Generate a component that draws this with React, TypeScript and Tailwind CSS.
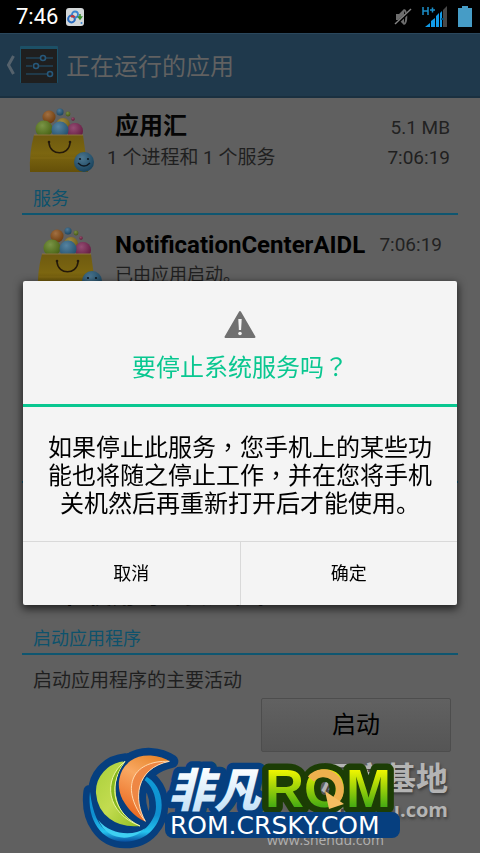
import { useId } from "react";

const cjk = "font-['Roboto','Noto_Sans_CJK_SC',sans-serif]";

function BagIcon({ className }: { className?: string }) {
    const id = useId();
    return (
        <svg viewBox="0 0 66 66" className={className} aria-hidden="true">
            <defs>
                <linearGradient id={`${id}bag`} x1="0" y1="0" x2="0" y2="1">
                    <stop offset="0" stopColor="#6e5a10" />
                    <stop offset="0.5" stopColor="#7c6610" />
                    <stop offset="1" stopColor="#655009" />
                </linearGradient>
                <radialGradient id={`${id}shine`} cx="0.4" cy="0.3" r="0.7">
                    <stop offset="0" stopColor="#fff" stopOpacity="0.2" />
                    <stop offset="1" stopColor="#000" stopOpacity="0.2" />
                </radialGradient>
            </defs>
            {[
                [20, 9, 6.5, "#8a4c12"],
                [31, 4, 3.5, "#23587c"],
                [39, 6, 2.4, "#587019"],
                [44, 11, 1.7, "#7a1f45"],
                [34, 17, 7, "#8b7015"],
                [15, 21, 8.5, "#597a18"],
                [46, 23, 8, "#7a2050"],
                [31, 22, 8.5, "#2c6488"],
            ].map(([cx, cy, r, fill]) => (
                <g key={`${cx}-${cy}`}>
                    <circle cx={cx} cy={cy} r={r} fill={fill as string} />
                    <circle cx={cx} cy={cy} r={r} fill={`url(#${id}shine)`} />
                </g>
            ))}
            <path d="M5 27H54L59 64H1Q0 45 5 27Z" fill={`url(#${id}bag)`} />
            <path d="M5 27H54" stroke="#8c7440" strokeWidth="1" />
            <path d="M2 50H58" stroke="#89701a" strokeWidth="0.6" />
            <path d="M20 35C21 48 40 48 41 35" fill="none" stroke="#24190a" strokeWidth="1.6" />
            <circle cx="20" cy="34" r="1.3" fill="#24190a" />
            <circle cx="41" cy="34" r="1.3" fill="#24190a" />
            <circle cx="55" cy="54" r="10" fill="#1f5474" />
            <circle cx="55" cy="54" r="10" fill={`url(#${id}shine)`} />
            <circle cx="51" cy="51" r="1.1" fill="#101820" />
            <circle cx="59" cy="51" r="1.1" fill="#101820" />
            <path d="M49 55Q55 61 61 55" fill="none" stroke="#101820" strokeWidth="1.4" />
        </svg>
    );
}

function StatusBar() {
    return (
        <header className="flex h-[33px] items-center bg-black pl-4 pr-2 text-white">
            <span className="text-[22px] leading-8">7:46</span>
            <svg viewBox="0 0 18 18" className="ml-2 size-[18px]" aria-hidden="true">
                <rect width="18" height="18" rx="3" fill="#d3d7d9" />
                <circle cx="5.5" cy="11" r="3.4" fill="none" stroke="#2a6cc0" strokeWidth="2" />
                <circle cx="9" cy="6.5" r="3" fill="none" stroke="#3a84d0" strokeWidth="1.8" />
                <path d="M5 9Q7 7 8.5 9.5" fill="none" stroke="#d03030" strokeWidth="2" />
                <path d="M14 6v3M12.5 9l1.5 2 1.5-2z" fill="#388c2c" stroke="#388c2c" strokeWidth="1.5" />
                <circle cx="15.5" cy="15" r="1" fill="#3a84d0" />
            </svg>
            <div className="ml-auto flex items-center">
                <svg viewBox="0 0 18 18" className="size-[18px]" aria-hidden="true">
                    <path d="M2 6h3l5-5v16l-5-5H2z" fill="#6d6d6d" />
                    <path d="M10 2c3 1 3 13 0 14" fill="none" stroke="#6d6d6d" strokeWidth="2" />
                    <path d="M1 17L17 2" stroke="#000" strokeWidth="3" />
                    <path d="M1 16L17 1" stroke="#858585" strokeWidth="1.4" />
                </svg>
                <svg viewBox="0 0 26 22" className="ml-2.5 h-[22px] w-[26px]" aria-hidden="true">
                    <path d="M1 1v8M6 1v8M1 5h5M8 4h5M10.5 1.5v5" fill="none" stroke="#1b8fc9" strokeWidth="1.5" />
                    <path d="M3 21l5-4v4zM9 21v-6l4-3v9zM14 21V10l3-3v14zM18 21V7l2-2v16z" fill="#119be8" />
                    <path d="M21 21V4l4-4v21z" fill="#484848" />
                    <path d="M19 13h3" stroke="#0a5078" strokeWidth="2" />
                </svg>
                <svg viewBox="0 0 14 21" className="ml-2.5 h-[21px] w-[14px]" aria-hidden="true">
                    <path d="M0 2h4V0h6v2h4v19H0z" fill="#469cc6" />
                </svg>
            </div>
        </header>
    );
}

function ActionBar() {
    return (
        <div className="flex h-[65px] items-center border-b-2 border-t border-b-[#1a3040] border-t-[#2a475c] bg-[#1f394c] pl-1.5">
            <button aria-label="返回" className="flex items-center">
                <svg viewBox="0 0 10 20" className="h-5 w-2.5" aria-hidden="true">
                    <path d="M7.5 1L2.5 10l5 9" fill="none" stroke="#55626c" strokeWidth="3" />
                </svg>
                <svg viewBox="0 0 38 38" className="ml-1 size-[38px]" aria-hidden="true">
                    <rect width="38" height="37" rx="1" fill="#1c5066" />
                    <rect x="1" y="3" width="36" height="34" fill="#1f1f1f" />
                    <path d="M6 12h14M26 12h7M6 20h6M19 20h14M6 28h21" stroke="#22445a" strokeWidth="1.5" />
                    <g fill="none" stroke="#27587a" strokeWidth="1.6">
                        <circle cx="23" cy="12" r="2.5" />
                        <circle cx="16" cy="20" r="2.5" />
                        <circle cx="30" cy="28" r="2.5" />
                    </g>
                </svg>
            </button>
            <h1 className="ml-2 pt-1 text-[24px] leading-8 text-[#616161]">正在运行的应用</h1>
        </div>
    );
}

function SectionTitle({ children }: { children: string }) {
    return (
        <h2 className="border-b-2 border-[#0f5670] pl-[11px] text-[18px] leading-7 text-[#0d526c]">
            {children}
        </h2>
    );
}

// Full-width mark that sits in the middle of its cell
function Mark({ children }: { children: string }) {
    return <span className="font-['Noto_Sans_CJK_TC',sans-serif] leading-none">{children}</span>;
}

function StopDialog() {
    return (
        <div className="fixed inset-x-0 bottom-0 top-[33px] flex items-center px-[23px]">
            <div
                role="alertdialog"
                aria-labelledby="stop-title"
                aria-describedby="stop-text"
                className="w-full rounded-xs bg-[#f4f4f4] text-center text-black shadow-[0_3px_9px_1px_rgba(0,0,0,0.65)]"
            >
                <div className="flex flex-col items-center border-b-3 border-[#09c790] pb-[18px] pt-[29px]">
                    <svg viewBox="0 0 32 28" className="h-7 w-8" aria-hidden="true">
                        <path d="M16 2L30.5 27h-29z" fill="#707070" stroke="#707070" strokeWidth="2" strokeLinejoin="round" />
                        <path d="M14.3 9h3.4l-.6 11h-2.2z" fill="#f4f4f4" />
                        <circle cx="16" cy="23.5" r="1.8" fill="#f4f4f4" />
                    </svg>
                    <h2 id="stop-title" className="mt-3 text-[24px] leading-9 text-[#09c790]">
                        要停止系统服务吗<Mark>？</Mark>
                    </h2>
                </div>
                <p id="stop-text" className="px-6 pb-[23px] pt-[27px] text-[24px] leading-7">
                    如果停止此服务<Mark>，</Mark>您手机上的某些功能也将随之停止工作<Mark>，</Mark>并在您将手机关机然后再重新打开后才能使用。
                </p>
                <div className="flex h-16 border-t border-[#d9d9d9] text-[18px]">
                    <button className="flex-1 border-r border-[#d9d9d9]">取消</button>
                    <button className="flex-1">确定</button>
                </div>
            </div>
        </div>
    );
}

const ring =
    "M60 155C50 240 95 305 165 305C235 305 275 250 275 195C275 155 255 122 225 107L220 118C245 135 258 165 258 200C258 225 245 245 230 262C200 290 150 295 115 275C85 260 68 220 60 155Z";
const lime = "M167 60C110 65 72 110 75 160C80 225 135 272 218 260C150 235 110 150 167 60Z";
const orange = "M305 64C270 40 215 35 180 60C140 90 135 140 155 180C175 215 200 240 232 250C195 190 190 90 305 64Z";

function RomLogo() {
    const id = useId();
    return (
        <svg
            viewBox="0 0 320 106"
            className="absolute left-[82px] top-[747px] h-[106px] w-[320px]"
            aria-label="非凡ROM"
        >
            <defs>
                <linearGradient id={`${id}rom`} x1="0" y1="0" x2="0" y2="1">
                    <stop offset="0.2" stopColor="#f0f600" />
                    <stop offset="0.8" stopColor="#49ac12" />
                </linearGradient>
                <linearGradient id={`${id}lime`} x1="0" y1="0" x2="1" y2="1">
                    <stop offset="0" stopColor="#a8cf3a" />
                    <stop offset="0.5" stopColor="#c3dc50" />
                    <stop offset="1" stopColor="#8fbd20" />
                </linearGradient>
                <linearGradient id={`${id}orange`} x1="0.8" y1="0" x2="0.4" y2="1">
                    <stop offset="0" stopColor="#e58226" />
                    <stop offset="0.4" stopColor="#f9a862" />
                    <stop offset="1" stopColor="#e9641c" />
                </linearGradient>
                <linearGradient id={`${id}ring`} x1="0" y1="0" x2="0" y2="1">
                    <stop offset="0" stopColor="#0f9bd7" />
                    <stop offset="0.6" stopColor="#0f8fcf" />
                    <stop offset="0.85" stopColor="#25c3ee" />
                    <stop offset="1" stopColor="#084fa0" />
                </linearGradient>
                <linearGradient id={`${id}ice`} x1="0" y1="0" x2="0" y2="1">
                    <stop offset="0.2" stopColor="#fff" />
                    <stop offset="1" stopColor="#b8dcf6" />
                </linearGradient>
            </defs>

            <g transform="scale(0.3333) translate(-36 -21)" strokeLinejoin="round">
                <path d={`${ring}${lime}${orange}`} fill="#063f7f" stroke="#063f7f" strokeWidth="40" />
                <path d={ring} fill={`url(#${id}ring)`} />
                <path d="M85 240C120 285 190 290 225 265C185 310 110 300 85 240Z" fill="#3fd0f2" />
                <path d={lime} fill={`url(#${id}lime)`} stroke="#063f7f" strokeWidth="6" />
                <path d="M165 64C95 120 110 220 210 258C140 225 105 150 165 64Z" fill="#86b71c" stroke="#edf5a0" strokeWidth="3" />
                <path d={orange} fill={`url(#${id}orange)`} stroke="#063f7f" strokeWidth="6" />
                <path d="M298 64C180 60 150 150 226 244C190 180 195 85 298 64Z" fill="#ee8744" stroke="#ffd9ae" strokeWidth="3" />
            </g>

            <g className="font-['Noto_Sans_CJK_SC',sans-serif] text-[46px] font-black italic" strokeLinejoin="round">
                <text x="86" y="60" fill={`url(#${id}ice)`} stroke="#063f7f" strokeWidth="13" paintOrder="stroke">
                    非凡
                </text>
            </g>
            <g className="font-['Liberation_Sans',sans-serif] text-[54px] font-bold" strokeLinejoin="round">
                <text x="183" y="60" fill={`url(#${id}rom)`} stroke="#1c3d05" strokeWidth="13" paintOrder="stroke">
                    ROM
                </text>
            </g>
            <path d="M229 32A16 16 0 1 1 254 53" fill="none" stroke="#eeb04e" strokeWidth="8" />
            <path d="M243 44L262 57L247 62Z" fill="#f3bd62" />
            <rect x="83" y="65" width="235" height="26" rx="8" fill="#063f7f" />
            <text x="88" y="87" fill="#fff" className="font-['DejaVu_Sans',sans-serif] text-[25px]">
                ROM.CRSKY.COM
            </text>
        </svg>
    );
}

export default function App() {
    return (
        <div className={`relative min-h-screen overflow-hidden bg-[#606060] ${cjk}`}>
            <StatusBar />
            <ActionBar />

            <main className="px-[22px]">
                <div className="flex h-[87px] pl-[7px] pt-2.5">
                    <BagIcon className="size-[66px]" />
                    <div className="ml-3 flex-1">
                        <div className="flex items-center pl-2">
                            <h2 className="text-[24px] font-bold leading-9 text-[#050505]">应用汇</h2>
                            <span className="ml-auto pr-2 pt-1 text-[19px] text-[#222]">5.1 MB</span>
                        </div>
                        <div className="flex text-[19px] leading-7 text-[#1f1f1f]">
                            <span>1 个进程和 1 个服务</span>
                            <span className="ml-auto pr-2">7:06:19</span>
                        </div>
                    </div>
                </div>

                <SectionTitle>服务</SectionTitle>

                <div className="flex h-[238px] pl-[15px] pt-3">
                    <BagIcon className="size-[66px]" />
                    <div className="ml-3 flex-1">
                        <div className="flex items-center pr-4 leading-9">
                            <h2 className="text-[24px] font-bold text-black">NotificationCenterAIDL</h2>
                            <span className="ml-auto text-[19px] text-[#222]">7:06:19</span>
                        </div>
                        <p className="text-[18px] leading-6 text-[#1f1f1f]">已由应用启动。</p>
                    </div>
                </div>

                <SectionTitle>进程</SectionTitle>

                <div className="flex h-[142px] flex-col justify-end pb-3 pl-[18px]">
                    <p className="text-[24px] font-bold leading-9 text-black">正在使用的主要进程。</p>
                </div>

                <SectionTitle>启动应用程序</SectionTitle>
                <p className="pl-[11px] pt-3 text-[19px] leading-7 text-[#1f1f1f]">启动应用程序的主要活动</p>
                <div className="flex justify-end pr-[7px] pt-[3px]">
                    <button className="h-[54px] w-[190px] rounded-xs border border-[#4d4d4d] bg-linear-to-b from-[#616161] to-[#555] text-[24px] text-black">
                        启动
                    </button>
                </div>
            </main>

            <div className="absolute right-8 top-[760px] text-right font-bold text-[#b4b4b4] [text-shadow:1px_2px_3px_#3a3a3a]">
                <p className="text-[32px] leading-[38px]">深度基地</p>
                <p className="font-['Open_Sans',sans-serif] text-[20px] leading-6">shendu.com</p>
            </div>
            <p className="absolute left-[267px] top-[828px] font-['Open_Sans',sans-serif] text-[14px] leading-6 text-[#b0b0b0]">
                www.shendu.com
            </p>

            <RomLogo />
            <StopDialog />
        </div>
    );
}
